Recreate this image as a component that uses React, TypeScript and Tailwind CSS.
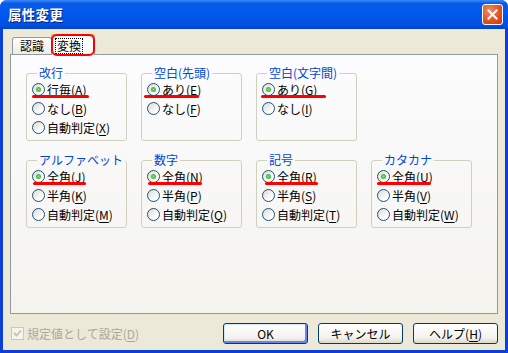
import React from "react";

type Opt = { label: string; key: string };
type Group = { title: string; options: Opt[]; mark: number; markLeft: number };

const row1: Group[] = [
  { title: "改行", options: [{ label: "行毎", key: "A" }, { label: "なし", key: "B" }, { label: "自動判定", key: "X" }], mark: 57, markLeft: 0 },
  { title: "空白(先頭)", options: [{ label: "あり", key: "E" }, { label: "なし", key: "F" }], mark: 55, markLeft: -3 },
  { title: "空白(文字間)", options: [{ label: "あり", key: "G" }, { label: "なし", key: "I" }], mark: 65, markLeft: -1 },
];

const row2: Group[] = [
  { title: "アルファベット", options: [{ label: "全角", key: "J" }, { label: "半角", key: "K" }, { label: "自動判定", key: "M" }], mark: 53, markLeft: 1 },
  { title: "数字", options: [{ label: "全角", key: "N" }, { label: "半角", key: "P" }, { label: "自動判定", key: "Q" }], mark: 54, markLeft: 1 },
  { title: "記号", options: [{ label: "全角", key: "R" }, { label: "半角", key: "S" }, { label: "自動判定", key: "T" }], mark: 53, markLeft: 3 },
  { title: "カタカナ", options: [{ label: "全角", key: "U" }, { label: "半角", key: "V" }, { label: "自動判定", key: "W" }], mark: 54, markLeft: 0 },
];

const Radio = ({ checked }: { checked: boolean }) => (
  <span className="w-[13px] h-[13px] rounded-full border border-[#1C5180] bg-[linear-gradient(135deg,#dcd9cc,#ffffff_75%)] flex items-center justify-center shrink-0">
    {checked && <span className="w-[5px] h-[5px] rounded-full bg-[radial-gradient(circle,#7be36f,#21a121)]" />}
  </span>
);

const GroupBox = ({ g }: { g: Group }) => (
  <fieldset className="w-[101px] h-[75px] border border-[#D0D0BF] rounded-[3px] pl-[5px]">
    <legend className="ml-[5px] px-[2px] text-[12px] leading-[14px] text-[#0046D5]">{g.title}</legend>
    {g.options.map((o, i) => (
      <div key={o.key} className="relative h-[19px] flex items-center gap-[2px] text-[12px] text-black">
        <Radio checked={i === 0} />
        <span>
          {o.label}(<span className="underline underline-offset-2">{o.key}</span>)
        </span>
        {i === 0 && (
          <span
            className="absolute bottom-[1px] h-[3px] rounded-full bg-[#FF0000]"
            style={{ left: g.markLeft, width: g.mark }}
          />
        )}
      </div>
    ))}
  </fieldset>
);

const Button = ({ children, def }: { children: React.ReactNode; def?: boolean }) => (
  <button
    className={
      "w-[85px] h-[21px] rounded-[3px] border border-[#003C74] bg-[linear-gradient(to_bottom,#ffffff,#f4f3ee_70%,#dcd8cc)] text-[12px] text-black flex items-center justify-center " +
      (def ? "shadow-[inset_-2px_-2px_#6982ee,inset_1px_1px_#cee7ff]" : "")
    }
  >
    {children}
  </button>
);

export default function App() {
  return (
    <div className="w-[508px] h-[353px] flex flex-col rounded-t-[7px] overflow-hidden bg-[#0B3FD6] font-['Noto_Sans_CJK_JP','Noto_Sans',sans-serif]">
      <div className="h-[29px] shrink-0 flex items-center justify-between pl-[8px] pr-[5px] bg-[linear-gradient(to_bottom,#3b8cf6,#0a5ae8_12%,#0058ee_45%,#0052e2_85%,#0343c8)]">
        <span className="text-white font-bold text-[13.5px] tracking-[0.3px] [text-shadow:1px_1px_#0a1f80]">属性変更</span>
        <span className="w-[21px] h-[21px] rounded-[3px] border border-white bg-[radial-gradient(circle_at_35%_30%,#f08a6a,#e0501f_60%,#c83a12)] flex items-center justify-center">
          <svg width="11" height="11" viewBox="0 0 11 11">
            <path d="M1.5 1.5 L9.5 9.5 M9.5 1.5 L1.5 9.5" stroke="#ffffff" strokeWidth="2" strokeLinecap="square" />
          </svg>
        </span>
      </div>

      <div className="flex-1 flex flex-col mx-[3px] mb-[3px] bg-[#ECE9D8]">
        <div className="h-[20px] mt-[5px] ml-[9px] flex items-end relative z-10">
          <div className="h-[17px] px-[7px] border border-b-0 border-[#919B9C] rounded-t-[3px] bg-[linear-gradient(to_bottom,#ffffff,#ecebe6)] text-[12px] leading-[15px] text-black">
            認識
          </div>
          <div className="relative h-[21px] w-[44px] -mb-px -ml-px pl-[3px] pt-[2px] border-x border-[#919B9C] rounded-t-[3px] bg-[#FCFCFE] border-t-2 border-t-[#E68B2C] text-[12px] leading-[14px] text-black">
            <span className="inline-block px-[1px] border border-dotted border-black">変換</span>
            <span className="absolute -left-[1px] -top-[2px] w-[44px] h-[22px] rounded-[6px] border-[2.5px] border-[#FF0000]" />
          </div>
        </div>

        <div className="h-[260px] ml-[7px] mr-[7px] border border-[#919B9C] bg-[linear-gradient(to_bottom,#fcfcfe,#f4f3ee)] pl-[15px] pt-[11px] flex flex-col gap-[12px]">
          <div className="flex gap-[14px]">
            {row1.map((g) => (
              <GroupBox key={g.title} g={g} />
            ))}
          </div>
          <div className="flex gap-[14px]">
            {row2.map((g) => (
              <GroupBox key={g.title} g={g} />
            ))}
          </div>
        </div>

        <div className="flex items-center justify-between mt-[9px] ml-[8px] mr-[7px]">
          <div className="flex items-center gap-[3px] text-[12px] text-[#ACA899]">
            <span className="w-[13px] h-[13px] border border-[#CAC8BB] bg-[#F5F4EA] flex items-center justify-center">
              <svg width="9" height="9" viewBox="0 0 9 9">
                <path d="M1 4 L3.5 6.5 L8 1.5" fill="none" stroke="#C4C2B4" strokeWidth="1.8" />
              </svg>
            </span>
            <span>
              規定値として設定(<span className="underline underline-offset-2">D</span>)
            </span>
          </div>
          <div className="flex gap-[10px]">
            <Button def>OK</Button>
            <Button>キャンセル</Button>
            <Button>
              ヘルプ(<span className="underline underline-offset-2">H</span>)
            </Button>
          </div>
        </div>
      </div>
    </div>
  );
}
